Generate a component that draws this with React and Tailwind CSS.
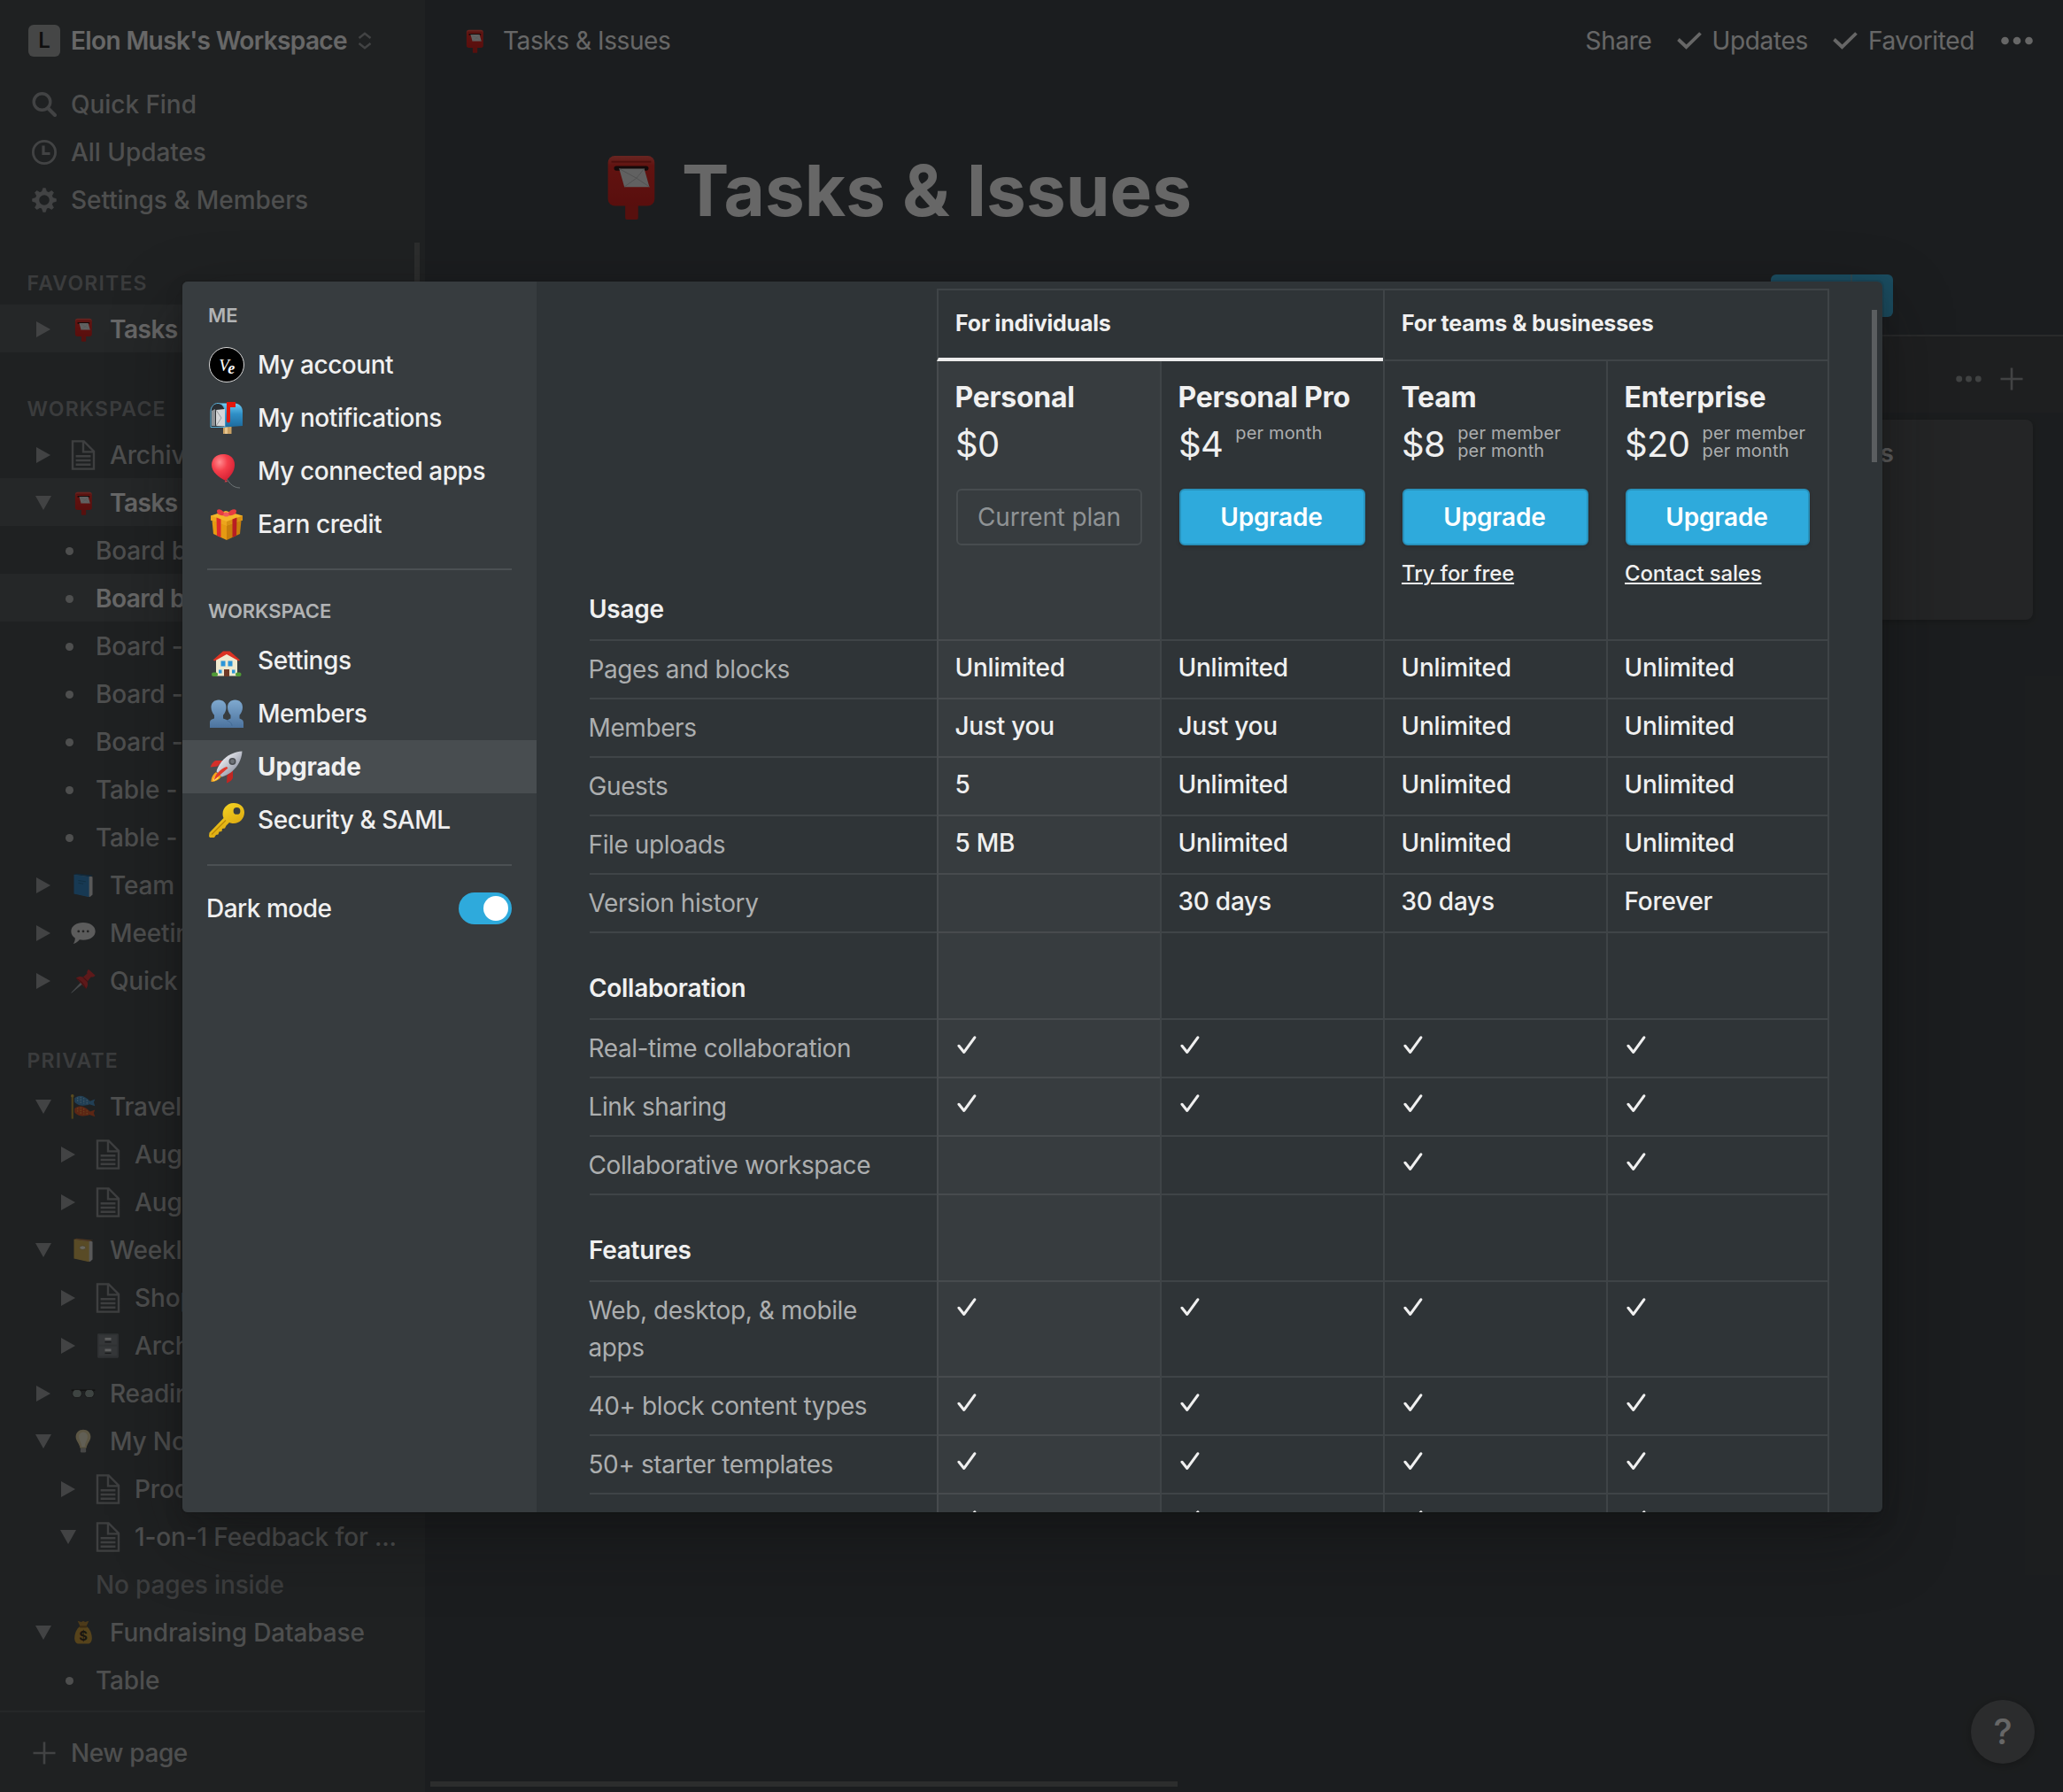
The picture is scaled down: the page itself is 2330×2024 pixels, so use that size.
import React from "react";

/* ---------- pictograms ---------- */

const Postbox = ({ className }) => (
  <svg viewBox="0 0 40 40" className={className}>
    <defs>
      <linearGradient id="pb" x1="0" y1="0" x2="0" y2="1">
        <stop offset="0" stopColor="#ee4a40" />
        <stop offset="0.2" stopColor="#dd1a14" />
        <stop offset="1" stopColor="#c80f0c" />
      </linearGradient>
    </defs>
    <rect x="17" y="30" width="7.500" height="9.500" rx="1" fill="#c4120e" />
    <rect x="7" y="2.500" width="27" height="29" rx="4" fill="url(#pb)" />
    <rect x="9" y="5.500" width="23" height="1" fill="#a80f0c" />
    <rect x="10.500" y="8.500" width="20" height="2.600" rx="1.300" fill="#1c0303" />
    <path d="M13.500 10h14.500l3 10.700h-14.500z" fill="#dcdcdc" />
    <path d="M13.500 10l10 5.500 4.500-5.500M16.500 20.500l7-5 7.500 5" fill="none" stroke="#b4b4b4" strokeWidth="0.500" />
  </svg>
);

const Mailbox = ({ className }) => (
  <svg viewBox="0 0 40 40" className={className}>
    <defs>
      <linearGradient id="mb" x1="0" y1="0" x2="0" y2="1">
        <stop offset="0" stopColor="#6fcdf5" />
        <stop offset="0.45" stopColor="#2f8fc6" />
        <stop offset="1" stopColor="#1d6a9c" />
      </linearGradient>
    </defs>
    <rect x="16" y="30" width="9.500" height="8" fill="#c9a063" />
    <rect x="18" y="30" width="3" height="8" fill="#e6c48c" />
    <path d="M9 3.500h20c5 0 9 4 9 9V29l-20 1.500H9z" fill="url(#mb)" />
    <path d="M2 30.500V13C2 7.500 5.500 3.500 10 3.500S18 7.500 18 13v17.500z" fill="#2b2f33" stroke="#5bb2dc" strokeWidth="1" />
    <path d="M8 11l10-1v19.500L8 29z" fill="#d4d6d8" />
    <path d="M8 11l6 9-6 9" fill="none" stroke="#9a9da0" strokeWidth="1" />
    <path d="M3 12l4-2v19H3z" fill="#8d9296" />
    <path d="M20 2h10v6h-6v15.500a2 2 0 0 1-4 0z" fill="#e3180d" />
  </svg>
);

const Balloon = ({ className }) => (
  <svg viewBox="0 0 40 40" className={className}>
    <defs>
      <radialGradient id="bl" cx="0.35" cy="0.3" r="0.75">
        <stop offset="0" stopColor="#ff8b8f" />
        <stop offset="0.45" stopColor="#f53f4b" />
        <stop offset="1" stopColor="#d31f33" />
      </radialGradient>
    </defs>
    <path d="M19 27c3 5 7 12 16 12" fill="none" stroke="#6d7476" strokeWidth="1" />
    <path d="M16 1C8 1 3 6.500 3 13c0 8 8 14 16 18 6-6 10-11 10-18C29 6 24 1 16 1z" fill="url(#bl)" />
    <path d="M17.500 32.500l1.500-2 2.500 1.500z" fill="#e0404c" />
  </svg>
);

const Gift = ({ className }) => (
  <svg viewBox="0 0 40 40" className={className}>
    <path d="M3.500 16L20 21v17L5 31z" fill="#e69a12" />
    <path d="M36.500 16L20 21v17l15-7z" fill="#c77e0c" />
    <path d="M2 10.500L19 5l19 5.500v5L20 21.500 2 15.500z" fill="#f4b62a" />
    <path d="M2 10.500l18 6.500v4.500L2 15.500z" fill="#eda51c" />
    <path d="M38 10.500L20 17v4.500l18-6z" fill="#d68f13" />
    <path d="M8.500 12.500l5 2V35l-4.500-2.100z" fill="#df2a2c" />
    <path d="M31.500 12.500l-5 2V35l4.500-2.100z" fill="#b81d22" />
    <path d="M19 9C14 2 9 2 9 5.500c0 4 5 5.500 10 4.500zM20 9c5-7 11-7 11-3.500 0 4-6 5.500-11 4.500z" fill="#e63c40" />
    <ellipse cx="19.500" cy="9" rx="3.200" ry="2.600" fill="#f15a5c" />
  </svg>
);

const House = ({ className }) => (
  <svg viewBox="0 0 40 40" className={className}>
    <g transform="translate(0 2.500)">
      <path d="M8 15.500L20 8l12 7.500V35H8z" fill="#efe9cf" />
      <path d="M4.500 17L16 7h7.500L35 17l-1.500 1L20 10.500 6.500 18z" fill="#dc3222" />
      <rect x="3" y="31" width="7" height="4.500" rx="2" fill="#4f9a36" />
      <rect x="30" y="31" width="6.500" height="4.500" rx="2" fill="#4f9a36" />
      <rect x="13.500" y="18" width="5" height="6" fill="#2c95d8" />
      <rect x="21.500" y="18" width="5" height="6" fill="#2c95d8" />
      <rect x="11" y="28" width="3.500" height="4" fill="#2c95d8" />
      <rect x="26" y="28" width="3.500" height="4" fill="#2c95d8" />
      <rect x="17" y="27.500" width="6" height="8" fill="#6f3a28" />
    </g>
  </svg>
);

const Members = ({ className }) => (
  <svg viewBox="0 0 40 40" className={className}>
    <defs>
      <linearGradient id="mm" x1="0" y1="0" x2="0" y2="1">
        <stop offset="0" stopColor="#7fa9cf" />
        <stop offset="1" stopColor="#4c739e" />
      </linearGradient>
    </defs>
    <path d="M29.500 4.500c5.300 0 8.500 3.500 8.500 8.500 0 3.500-1.500 6.500-3.500 8.700v3.800c2 .8 4.500 1.500 4.500 5V36H18v-5.500c0-2 3-3.500 6.500-5v-3.800C22.500 19.500 21 16.500 21 13c0-5 3.200-8.500 8.500-8.500z" fill="url(#mm)" />
    <path d="M11 4.500c5.300 0 8.500 3.500 8.500 8.500 0 3.500-1.500 6.500-3.500 8.700v3.800c4 1.500 10 3.500 10 8V36H1v-5.500c0-3.500 2.500-4.200 5-5v-3.800C4 19.500 2.500 16.500 2.500 13c0-5 3.200-8.500 8.500-8.500z" fill="url(#mm)" />
    <path d="M20 27.500c3 1.300 6 3 6 6.500" fill="none" stroke="#3f648e" strokeWidth="0.700" />
  </svg>
);

const Rocket = ({ className }) => (
  <svg viewBox="0 0 40 40" className={className}>
    <defs>
      <linearGradient id="rk" x1="0" y1="0" x2="1" y2="1">
        <stop offset="0.200" stopColor="#f1f2f6" />
        <stop offset="0.800" stopColor="#8e93a3" />
      </linearGradient>
    </defs>
    <path d="M8 26c-4 3-5.500 7-5.500 11C7 37 11 35 14 31z" fill="#f7a51c" />
    <path d="M8 30c-2 2-3 4-3 6 2.500-.5 5-2 6-4z" fill="#ffe36b" />
    <path d="M16 13H8c-2.500 0-5 4-6.500 7.500l8-1z" fill="#d3302a" />
    <path d="M27 24v8c0 2.500-3.500 5-7 6.500l.5-9z" fill="#c02622" />
    <path d="M37.500 2.500C28 3 19 8 14 14.500c-3 4-5 8-5.500 11l6 6c3.500-1 8-3 12-6.500 6-5.500 10.500-13 11-22.500z" fill="url(#rk)" />
    <circle cx="26.500" cy="14" r="4" fill="#4a4d52" />
    <circle cx="26.500" cy="14" r="2.400" fill="#6d7177" />
    <path d="M20 20l1.500 1.500L6 35c0-5 7-13 14-15z" fill="#e03a2c" />
  </svg>
);

const Key = ({ className }) => (
  <svg viewBox="0 0 40 40" className={className}>
    <defs>
      <linearGradient id="ky" x1="0" y1="0" x2="0.600" y2="1">
        <stop offset="0" stopColor="#fbe028" />
        <stop offset="1" stopColor="#d79f0d" />
      </linearGradient>
    </defs>
    <path
      fillRule="evenodd"
      fill="url(#ky)"
      d="M28 1c7 0 12 4.500 12 10.500 0 7-5.500 12.500-12 12.500-2 0-3.500-.3-5-1l-3.500 3.500-1.500 3-3 .5-.5 3-3 .5-1 3-2.500.5L6 40H1l-1-1.500 .5-4L16.500 18c-.7-1.500-1-3-1-4.500C15.500 6.500 21 1 28 1zm3.500 5a3.900 3.900 0 1 0 0 7.800 3.900 3.900 0 0 0 0-7.800z"
    />
    <path d="M3 36.500L19 20.500" stroke="#b98708" strokeWidth="1.200" />
  </svg>
);

const Book = ({ className, front, side, label }) => (
  <svg viewBox="0 0 40 40" className={className}>
    <path d="M6 3l26 2.500 3 1V35l-4 3.500L6 33z" fill="#c9c9c9" />
    <path d="M5 2.500L29.500 6v33L5 33.500z" fill={front} />
    <path d="M5 2.500l4-1.500 27 3-6.500 2z" fill={side} />
    {label ? (
      <ellipse cx="19" cy="16" rx="5" ry="3.200" fill="#eee8d5" stroke="#9b8440" strokeWidth="1" />
    ) : (
      <path d="M12 12l12 2M12 16l8 1.500" stroke="#17608f" strokeWidth="1.500" />
    )}
  </svg>
);

const BlueBook = (p) => <Book {...p} front="#2478b8" side="#12507e" />;
const YellowBook = (p) => <Book {...p} front="#c9a549" side="#a8703a" label />;

const Speech = ({ className }) => (
  <svg viewBox="0 0 40 40" className={className}>
    <path d="M20 3c11 0 19.500 5.800 19.500 14S31 31 20 31c-2 0-4-.2-6-.6C12 33.500 8.500 36 4 37c2-2.500 3-5.500 2.800-9.200C2.800 25.300 .5 21.500 .5 17 .5 8.800 9 3 20 3z" fill="#d0d0d0" />
    <circle cx="12.500" cy="17" r="2" fill="#444" />
    <circle cx="20" cy="17" r="2" fill="#444" />
    <circle cx="27.500" cy="17" r="2" fill="#444" />
  </svg>
);

const Pin = ({ className }) => (
  <svg viewBox="0 0 40 40" className={className}>
    <path d="M1 39L16 23l2 2z" fill="#9ea6ac" stroke="#9ea6ac" />
    <path d="M8.500 15.500c4-3 8-3 11-1.500l7-6c-1-2 0-5 2-7L39.500 11c-2 2.500-5 3-7 2.500L26.500 21c1.500 3.500 1 8-2 11.500z" fill="#d2282b" />
    <path d="M9 16c5 2 12 9 15 16" fill="none" stroke="#8f1719" strokeWidth="1.500" />
    <path d="M20 14l7 7" stroke="#8f1719" strokeWidth="1.500" />
  </svg>
);

const Streamer = ({ className }) => (
  <svg viewBox="0 0 40 40" className={className}>
    <rect x="1" y="1" width="3" height="38.500" fill="#b3922c" />
    <circle cx="2.500" cy="2.500" r="2.500" fill="#c7a638" />
    <path d="M6 6c6-5 15-6 25 5l8-3-2 5 2 6-9-3c-8 4-20 2-24-4z" fill="#3d88bd" />
    <path d="M6 23c6-5 15-6 25 5l8-3-2 5 2 6-9-3c-8 4-20 2-24-4z" fill="#cf4a1d" />
    <path d="M11 5v8M16 4v11M21 6v9M26 9v6" stroke="#9fd0ea" strokeWidth="1.500" strokeDasharray="2 2" />
    <path d="M11 22v8M16 21v11M21 23v9M26 26v6" stroke="#efa33a" strokeWidth="1.500" strokeDasharray="2 2" />
  </svg>
);

const Cabinet = ({ className }) => (
  <svg viewBox="0 0 40 40" className={className}>
    <rect x="3" y="0.500" width="34" height="39" rx="1.500" fill="#62676b" />
    <rect x="6" y="3" width="28" height="15" fill="#6f7478" />
    <rect x="6" y="21" width="28" height="15" fill="#6f7478" />
    <rect x="15" y="7" width="10" height="4" fill="#d5d7d8" />
    <rect x="15" y="25" width="10" height="4" fill="#d5d7d8" />
    <rect x="15" y="13" width="10" height="2" fill="#2d3033" />
    <rect x="15" y="31" width="10" height="2" fill="#2d3033" />
  </svg>
);

const Glasses = ({ className }) => (
  <svg viewBox="0 0 40 40" className={className}>
    <path d="M1 14.500h38" stroke="#151515" strokeWidth="2" />
    <rect x="2.500" y="13.500" width="15" height="13" rx="6" fill="#85938f" stroke="#222" strokeWidth="1.200" />
    <rect x="22.500" y="13.500" width="15" height="13" rx="6" fill="#85938f" stroke="#222" strokeWidth="1.200" />
  </svg>
);

const Bulb = ({ className }) => (
  <svg viewBox="0 0 40 40" className={className}>
    <path d="M20 1c7 0 12 5 12 11.500 0 7-6 11-7 18.500H15c-1-7.500-7-11.500-7-18.500C8 6 13 1 20 1z" fill="#cfc193" />
    <path d="M20 5c4 0 7 3 7 7.500 0 5-4 9-4.500 16h-5C17 21.500 13 17.500 13 12.500 13 8 16 5 20 5z" fill="#ddd6bd" />
    <rect x="15.500" y="31" width="9" height="7" rx="2" fill="#9b9b98" />
  </svg>
);

const MoneyBag = ({ className }) => (
  <svg viewBox="0 0 40 40" className={className}>
    <path d="M11 1l6 2 3-2 3 2 6-2-4 9H15z" fill="#a87b2b" />
    <path d="M14.500 10h11C31 14 34 22 34 29c0 6-3 9-7 9H13c-4 0-7-3-7-9 0-7 3-15 8.500-19z" fill="#c0912f" />
    <rect x="13.500" y="9" width="13" height="3" rx="1.500" fill="#7e561a" />
    <text x="20" y="33" textAnchor="middle" fontSize="21" fontWeight="700" fill="#2a2212" fontFamily="Inter, sans-serif">$</text>
  </svg>
);

/* ---------- interface icons ---------- */

const FileIcon = ({ className }) => (
  <svg viewBox="0 0 30 30" className={className} fill="#85888b">
    <path d="M16,1H4v28h22V11L16,1z M16,3.828L23.172,11H16V3.828z M24,27H6V3h8v10h10V27z M8,17h14v-2H8V17z M8,21h14v-2H8V21z M8,25h14v-2H8V25z" />
  </svg>
);

const SearchIcon = () => (
  <svg viewBox="0 0 28 28" className="size-7" fill="none" stroke="#8f9294" strokeLinecap="round">
    <circle cx="11.500" cy="11" r="9.300" strokeWidth="3.400" />
    <path d="M18.500 18.500L26 26" strokeWidth="4" />
  </svg>
);

const ClockIcon = () => (
  <svg viewBox="0 0 28 28" className="size-7" fill="none" stroke="#8f9294">
    <circle cx="14" cy="14" r="12.600" strokeWidth="2.800" />
    <path d="M13 6.500V15.500H20.500" strokeWidth="3.200" />
  </svg>
);

const GearIcon = () => (
  <svg viewBox="0 0 28 28" className="size-7" fill="none" stroke="#8f9294">
    <circle cx="14" cy="14" r="8" strokeWidth="4.400" />
    {[0, 45, 90, 135, 180, 225, 270, 315].map((a) => (
      <path key={a} d="M12.600 0.700h2.800l1.300 4.800h-5.400z" fill="#8f9294" stroke="#8f9294" strokeWidth="0.800" strokeLinejoin="round" transform={`rotate(${a} 14 14)`} />
    ))}
  </svg>
);

const PlusIcon = () => (
  <svg viewBox="0 0 26 26" className="size-[26px]" stroke="#8f9294" strokeWidth="2.600">
    <path d="M13 0.500v25M0.500 13h25" />
  </svg>
);

const TopCheck = () => (
  <svg viewBox="0 0 28 20" className="h-5 w-7" fill="none" stroke="#eaeaea" strokeWidth="3.800">
    <path d="M1.500 8.500l9 8.500L26.500 1.500" />
  </svg>
);

const Tick = () => (
  <svg viewBox="0 0 22 21" className="mt-[17.5px] ml-[1px] h-[21px] w-[22px]" fill="none" stroke="#f0f0f0" strokeWidth="3.100" strokeLinecap="round" strokeLinejoin="round">
    <path d="M2 11.300L7.800 18.400L19.800 1.800" />
  </svg>
);

const Dots = ({ className, fill }) => (
  <svg viewBox="0 0 36 10" className={className} fill={fill}>
    <circle cx="4.500" cy="5" r="4.300" />
    <circle cx="18" cy="5" r="4.300" />
    <circle cx="31.500" cy="5" r="4.300" />
  </svg>
);

const Arrow = ({ open }) => (
  <svg viewBox="0 0 18 18" className="size-[18px]" fill="#8f9294">
    {open ? <path d="M0 1h18L9 17z" /> : <path d="M1 0l16 9L1 18z" />}
  </svg>
);

/* ---------- sidebar ---------- */

const WORKSPACE_ROWS = [
  { t: "Archive", a: "closed", icon: FileIcon },
  { t: "Tasks & Issues", a: "open", icon: Postbox, strong: true, hl: true },
  { t: "Board by Status" },
  { t: "Board by Assignee", strong: true, hl: true },
  { t: "Board - Design" },
  { t: "Board - Product" },
  { t: "Board - Mobile" },
  { t: "Table - All" },
  { t: "Table - Bugs" },
  { t: "Team Home", a: "closed", icon: BlueBook },
  { t: "Meeting Notes", a: "closed", icon: Speech },
  { t: "Quick Note", a: "closed", icon: Pin },
];

const PRIVATE_ROWS = [
  { t: "Travel Plans", a: "open", icon: Streamer },
  { t: "August Trip", a: "closed", icon: FileIcon, sub: true },
  { t: "August Budget", a: "closed", icon: FileIcon, sub: true },
  { t: "Weekly Agenda", a: "open", icon: YellowBook },
  { t: "Shopping", a: "closed", icon: FileIcon, sub: true },
  { t: "Archive", a: "closed", icon: Cabinet, sub: true },
  { t: "Reading List", a: "closed", icon: Glasses },
  { t: "My Notes", a: "open", icon: Bulb },
  { t: "Product", a: "closed", icon: FileIcon, sub: true },
  { t: "1-on-1 Feedback for ...", a: "open", icon: FileIcon, sub: true },
  { t: "No pages inside", empty: true },
  { t: "Fundraising Database", a: "open", icon: MoneyBag },
  { t: "Table" },
];

function TreeRow({ t, a, icon: Icon, strong, hl, sub, empty }) {
  const tone = strong
    ? "font-semibold text-[#ececec] tracking-[-0.5px]"
    : empty
      ? "font-medium text-[#7f8284] tracking-[-0.15px]"
      : "font-medium text-[#adaeae] tracking-[-0.15px]";
  return (
    <div className={`flex h-[54px] shrink-0 items-center pt-[2px] whitespace-nowrap ${hl ? "bg-[#474b4e]" : ""} ${sub ? "pl-[68px]" : "pl-10"}`}>
      {Icon ? (
        <>
          <Arrow open={a === "open"} />
          <Icon className={Icon === FileIcon ? "ml-[18px] size-9" : "ml-[22px] mr-1 size-7"} />
          <span className={`ml-[12px] text-[28px] ${tone}`}>{t}</span>
        </>
      ) : (
        <>
          <span className={`ml-[34px] size-[9px] rounded-full ${empty ? "" : "bg-[#adaeae]"}`} />
          <span className={`ml-[25px] text-[28px] ${tone}`}>{t}</span>
        </>
      )}
    </div>
  );
}

const SectionLabel = ({ children }) => (
  <div className="h-[88px] shrink-0 pt-[50px] pl-[30.5px] text-[23px] leading-[29px] font-semibold tracking-[1.200px] text-[#7d8082]">{children}</div>
);

const NavRow = ({ icon, children }) => (
  <div className="flex h-[54px] items-center pl-9">
    {icon}
    <span className="ml-4 text-[28px] font-medium tracking-[-0.05px] text-[#adaeae]">{children}</span>
  </div>
);

function Sidebar() {
  return (
    <aside className="relative flex h-full w-[480px] shrink-0 flex-col overflow-hidden bg-[#373c3f]">
      <div className="flex h-[91px] shrink-0 items-center pl-8">
        <div className="flex size-9 items-center justify-center rounded-md bg-[#96989a] text-[24px] leading-none font-semibold text-[#111]">L</div>
        <span className="ml-[12px] text-[28px] font-semibold tracking-[-0.620px] text-[#ececec]">Elon Musk's Workspace</span>
        <svg viewBox="0 0 16 20" className="ml-[12px] h-5 w-4" fill="none" stroke="#8f9294" strokeWidth="2.400">
          <path d="M1.500 7L8 1.700L14.500 7M1.500 13L8 18.300L14.500 13" />
        </svg>
      </div>
      <NavRow icon={<SearchIcon />}>Quick Find</NavRow>
      <NavRow icon={<ClockIcon />}>All Updates</NavRow>
      <NavRow icon={<GearIcon />}>Settings &amp; Members</NavRow>
      <div className="mt-[3px] flex flex-col">
        <SectionLabel>FAVORITES</SectionLabel>
        <TreeRow t="Tasks & Issues" a="closed" icon={Postbox} strong hl />
        <SectionLabel>WORKSPACE</SectionLabel>
        {WORKSPACE_ROWS.map((r, i) => (
          <TreeRow key={i} {...r} />
        ))}
        <SectionLabel>PRIVATE</SectionLabel>
        {PRIVATE_ROWS.map((r, i) => (
          <TreeRow key={i} {...r} />
        ))}
      </div>
      <div className="mt-auto flex h-[92px] shrink-0 items-center border-t-2 border-[#474b4e] pt-[2px] pl-[37px]">
        <PlusIcon />
        <span className="ml-[17px] text-[28px] font-medium tracking-[-0.4px] text-[#adaeae]">New page</span>
      </div>
      <div className="absolute top-[274px] right-[6px] h-[700px] w-[6px] bg-[#575a5a]" />
    </aside>
  );
}

/* ---------- page behind the dialog ---------- */

function Page() {
  return (
    <main className="relative flex min-w-0 flex-1 flex-col bg-[#2f3437]">
      <div className="flex h-[92px] items-center pr-[34px] pl-[42px] text-[28px] tracking-[-0.350px] text-[#eaeaea]">
        <Postbox className="size-7" />
        <span className="ml-[18px] tracking-[-0.420px]">Tasks &amp; Issues</span>
        <span className="ml-auto">Share</span>
        <span className="ml-[28px]"><TopCheck /></span>
        <span className="ml-[12px]">Updates</span>
        <span className="ml-[28px]"><TopCheck /></span>
        <span className="ml-[12px]">Favorited</span>
        <Dots className="ml-[30px] h-[10px] w-9" fill="#eaeaea" />
      </div>
      <div className="mt-[73px] flex h-[100px] items-center pl-[193px]">
        <Postbox className="-mt-[10px] size-[78px]" />
        <h1 className="ml-[19px] text-[80px] leading-[100px] font-bold text-[#ececec]">Tasks &amp; Issues</h1>
      </div>
      <div className="mt-[45px] flex justify-end pr-[192px]">
        <div className="flex h-12 w-[138px] overflow-hidden rounded-md bg-[#2eaadc]">
          <div className="w-[92px] border-r-2 border-[#5fa0b8]" />
        </div>
      </div>
      <div className="mt-5 flex h-[88px] items-center justify-end gap-[21px] border-t-2 border-[#505356] bg-[#36383b] pt-[10px] pr-[45px]">
        <Dots className="h-2 w-[29px]" fill="#8b8e90" />
        <PlusIcon />
      </div>
      <div className="mt-2 mr-[34px] ml-auto h-[226px] w-[520px] rounded-lg bg-[#444649] pt-[17px] pr-[157px] text-right text-[28px] font-semibold text-[#dcdcdc] shadow-[0_2px_6px_rgba(15,15,15,0.4)]">
        Issues
      </div>
      <div className="absolute bottom-[6px] left-[6px] h-[6px] w-[844px] bg-[#575a5a]" />
      <div className="absolute right-8 bottom-8 flex size-[72px] items-center justify-center rounded-full bg-[#56585b] text-[40px] font-medium text-[#eaeaea] shadow-[0_2px_8px_rgba(15,15,15,0.5)]">
        ?
      </div>
    </main>
  );
}

/* ---------- dialog ---------- */

const Avatar = () => (
  <div className="flex size-10 items-center justify-center rounded-full border border-[#d8d8d8] bg-black font-['Liberation_Serif',serif] text-white">
    <span className="text-[19px] leading-none italic">V</span>
    <span className="-ml-[1px] mt-2 text-[18px] leading-none font-bold italic">e</span>
  </div>
);

const MenuLabel = ({ children }) => (
  <div className="pt-[26px] pb-[14px] pl-[29px] text-[22px] leading-6 font-semibold tracking-[-0.100px] text-[#b1b3b4]">{children}</div>
);

const MenuRow = ({ icon: Icon, active, children }) => (
  <div className={`flex h-[60px] items-center pl-[30px] text-[28px] text-[#f0f0f0] ${active ? "bg-[#484d50] font-bold tracking-[-0.100px]" : "font-[450] tracking-[-0.450px]"}`}>
    <Icon className="size-10" />
    <span className="ml-[15px]">{children}</span>
  </div>
);

const MenuDivider = () => <div className="mx-7 mt-5 mb-2 h-[2px] bg-[#4b5053]" />;

function SettingsMenu() {
  return (
    <nav className="w-[400px] shrink-0 bg-[#373c3f]">
      <MenuLabel>ME</MenuLabel>
      <MenuRow icon={Avatar}>My account</MenuRow>
      <MenuRow icon={Mailbox}>My notifications</MenuRow>
      <MenuRow icon={Balloon}>My connected apps</MenuRow>
      <MenuRow icon={Gift}>Earn credit</MenuRow>
      <MenuDivider />
      <MenuLabel>WORKSPACE</MenuLabel>
      <MenuRow icon={House}>Settings</MenuRow>
      <MenuRow icon={Members}>Members</MenuRow>
      <MenuRow icon={Rocket} active>Upgrade</MenuRow>
      <MenuRow icon={Key}>Security &amp; SAML</MenuRow>
      <MenuDivider />
      <div className="mt-[30px] flex items-center justify-between px-7">
        <span className="-ml-[1px] text-[28px] leading-9 font-[450] tracking-[-0.500px] text-[#f0f0f0]">Dark mode</span>
        <div className="flex h-9 w-[60px] items-center justify-end rounded-full bg-[#2eaadc] p-1">
          <div className="size-7 rounded-full bg-white" />
        </div>
      </div>
    </nav>
  );
}

const PLANS = [
  { name: "Personal", price: "$0", current: true },
  { name: "Personal Pro", price: "$4", per: ["per month"] },
  { name: "Team", price: "$8", per: ["per member", "per month"], link: "Try for free" },
  { name: "Enterprise", price: "$20", per: ["per member", "per month"], link: "Contact sales" },
];

const U = "Unlimited";
const ROWS = [
  ["Pages and blocks", U, U, U, U],
  ["Members", "Just you", "Just you", U, U],
  ["Guests", "5", U, U, U],
  ["File uploads", "5 MB", U, U, U],
  ["Version history", "", "30 days", "30 days", "Forever"],
  ["#Collaboration"],
  ["Real-time collaboration", true, true, true, true],
  ["Link sharing", true, true, true, true],
  ["Collaborative workspace", "", "", true, true],
  ["#Features"],
  ["Web, desktop, & mobile apps", true, true, true, true],
  ["40+ block content types", true, true, true, true],
  ["50+ starter templates", true, true, true, true],
  ["", true, true, true, true],
];

const GRID = "grid grid-cols-[392px_252px_252px_252px_252px]";

const cellTone = (i) =>
  i === 0
    ? "border-l-2 border-[#474b4e] bg-[#373c3f]"
    : i === 3
      ? "border-x-2 border-[#3f4447]"
      : "border-l-2 border-[#3f4447]";

const SectionTitle = ({ children }) => (
  <div className="flex items-end border-b-2 border-[#3f4447] pb-[13px] text-[28px] leading-[42px] font-semibold tracking-[-0.300px] text-[#f0f0f0]">
    <span className="-ml-[1px]">{children}</span>
  </div>
);

function PlanHead({ plan, i }) {
  return (
    <div className={`h-[316px] border-b-2 px-5 pt-[21px] text-[#f0f0f0] ${cellTone(i)}`}>
      <div className="-ml-[1.5px] text-[32px] leading-10 font-bold tracking-[-0.250px] whitespace-nowrap">{plan.name}</div>
      <div className="mt-[9px] flex h-12">
        <span className="-ml-[1px] text-[40px] leading-[48px] tracking-[-0.600px]">{plan.price}</span>
        {plan.per && (
          <div className="ml-[14px] pt-px text-[20px] leading-5 tracking-[0.150px] whitespace-nowrap text-[#acaeaf]">
            {plan.per.map((l) => (
              <div key={l}>{l}</div>
            ))}
          </div>
        )}
      </div>
      {plan.current ? (
        <div className="mt-[26px] flex h-16 items-center justify-center rounded-md border-2 border-[#474c4f] text-[28px] tracking-[-0.200px] text-[#8f9395]">Current plan</div>
      ) : (
        <div className="mt-[26px] flex h-16 items-center justify-center rounded-md border-2 border-[#2891bb] bg-[#2eaadc] pr-[2px] text-[28px] font-semibold tracking-[-0.150px] text-white shadow-[0_2px_4px_rgba(15,15,15,0.15)]">Upgrade</div>
      )}
      {plan.link && (
        <div className="mt-[14px] -ml-[1px] text-[24px] leading-9 font-[450] tracking-[-0.150px] underline decoration-2 underline-offset-[2px]">{plan.link}</div>
      )}
    </div>
  );
}

function PlansTable() {
  return (
    <div className="mt-2 ml-[60px] w-[1400px]">
      <div className="grid h-[82px] grid-cols-[392px_504px_504px] text-[25px] font-bold tracking-[-0.200px] text-[#f0f0f0]">
        <div />
        <div className="flex items-center border-t-2 border-b-4 border-l-2 border-[#3f4447] border-b-[#ececec] pl-[19px]">For individuals</div>
        <div className="flex items-center border-2 border-[#3f4447] pb-[2px] pl-[19px]">For teams &amp; businesses</div>
      </div>
      <div className={GRID}>
        <SectionTitle>Usage</SectionTitle>
        {PLANS.map((p, i) => (
          <PlanHead key={p.name} plan={p} i={i} />
        ))}
      </div>
      {ROWS.map(([label, ...vals], r) =>
        label[0] === "#" ? (
          <div key={r} className={`${GRID} h-[98px]`}>
            <SectionTitle>{label.slice(1)}</SectionTitle>
            {[0, 1, 2, 3].map((i) => (
              <div key={i} className={`border-b-2 ${cellTone(i)}`} />
            ))}
          </div>
        ) : (
          <div key={r} className={GRID}>
            <div className="min-h-[66px] border-b-2 border-[#3f4447] py-[11px] pr-8 text-[28px] leading-[42px] tracking-[-0.400px] text-[#acaeaf]">
              <div className="-ml-[1.5px]">{label}</div>
            </div>
            {vals.map((v, i) => (
              <div key={i} className={`border-b-2 px-5 text-[28px] text-[#f0f0f0] ${cellTone(i)}`}>
                {v === true ? <Tick /> : <div className="-ml-[1.5px] pt-[9px] leading-[42px] font-[450] tracking-[-0.250px]">{v}</div>}
              </div>
            ))}
          </div>
        )
      )}
    </div>
  );
}

export default function App() {
  return (
    <div className="relative flex h-[2024px] w-[2330px] overflow-hidden font-['Inter','Liberation_Sans',sans-serif]">
      <Sidebar />
      <Page />
      <div className="absolute inset-0 bg-[rgba(15,15,15,0.6)] pt-[318px] pl-[206px]">
        <div className="h-[1390px] w-[1920px] rounded-md shadow-[0_0_0_2px_rgba(15,15,15,0.1),0_10px_20px_rgba(15,15,15,0.2),0_30px_80px_rgba(15,15,15,0.4)]">
          <div className="relative flex h-full overflow-hidden rounded-md bg-[#2f3437]">
            <SettingsMenu />
            <PlansTable />
            <div className="absolute top-8 right-[6px] h-[172px] w-[6px] bg-[#5b5e60]" />
          </div>
        </div>
      </div>
    </div>
  );
}
